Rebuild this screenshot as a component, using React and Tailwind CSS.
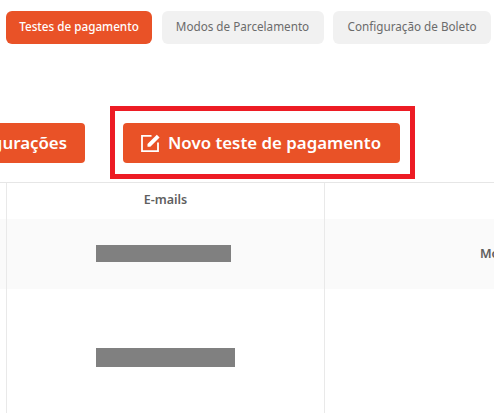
import React from 'react';

const Tab = ({ label, active, width }) => (
    <button className={`h-[33px] pb-[1px] rounded-md text-[11.7px] flex items-center justify-center ${width} ${active ? 'bg-[#e95227] text-white font-medium' : 'bg-[#f1f1f1] text-[#6b6b6b]'}`}>
        {label}
    </button>
);

const EditIcon = () => (
    <svg width="20" height="20" viewBox="0 0 20 20" fill="none" stroke="white" strokeWidth="1.8" className="mb-[1px]">
        <path d="M10.5 2.9H1V18.1H17V9.5" />
        <path d="M6.5 11 15.8 1.7 18.6 4.5 9.3 13.8H6.5Z" fill="white" stroke="none" />
    </svg>
);

export default function App() {
    return (
        <div className="w-[494px] h-[413px] overflow-hidden bg-white relative font-['Noto_Sans',sans-serif]">
            <div className="flex pt-[11px] pl-[6px] gap-[9.5px]">
                <Tab label="Testes de pagamento" active width="w-[146px]" />
                <Tab label="Modos de Parcelamento" width="w-[162px]" />
                <Tab label="Configuração de Boleto" width="w-[158px]" />
            </div>

            <div className="flex mt-[79px] ml-[-115px] gap-[38px]">
                <button className="w-[200px] h-[40px] shrink-0 rounded bg-[#e95227] text-white text-[16.85px] font-semibold flex items-center justify-end pr-[18px]">
                    Configurações
                </button>
                <button className="w-[277px] h-[40px] shrink-0 rounded bg-[#e95227] text-white text-[16.85px] font-semibold flex items-center pl-[18px] gap-[7px]">
                    <EditIcon />
                    Novo teste de pagamento
                </button>
            </div>

            {/* red highlight drawn over the page */}
            <div className="absolute left-[110px] top-[106px] w-[305px] h-[73px] border-[5px] border-[#ed1c24]" />

            <div className="mt-[19px] border-t border-[#e6e6e6] text-[#5f5f5f] text-[12.5px] font-semibold">
                <div className="grid grid-cols-[7px_318px_1fr] h-[36px]">
                    <div className="border-r border-[#e9e9e9]" />
                    <div className="border-r border-[#e9e9e9] flex items-center justify-center pb-[2px]">E-mails</div>
                    <div />
                </div>
                <div className="grid grid-cols-[7px_318px_1fr] h-[70px] bg-[#fafafa]">
                    <div className="border-r border-[#e9e9e9]" />
                    <div className="border-r border-[#e9e9e9] flex items-center pl-[89px] pb-[2px]">
                        <div className="w-[135px] h-[17px] bg-[#808080]" />
                    </div>
                    <div className="pl-[155px] flex items-center overflow-hidden whitespace-nowrap">Mo</div>
                </div>
                <div className="grid grid-cols-[7px_318px_1fr] h-[137px]">
                    <div className="border-r border-[#e9e9e9]" />
                    <div className="border-r border-[#e9e9e9] flex items-center pl-[89px]">
                        <div className="w-[139px] h-[19px] bg-[#808080]" />
                    </div>
                    <div />
                </div>
            </div>
        </div>
    );
}
